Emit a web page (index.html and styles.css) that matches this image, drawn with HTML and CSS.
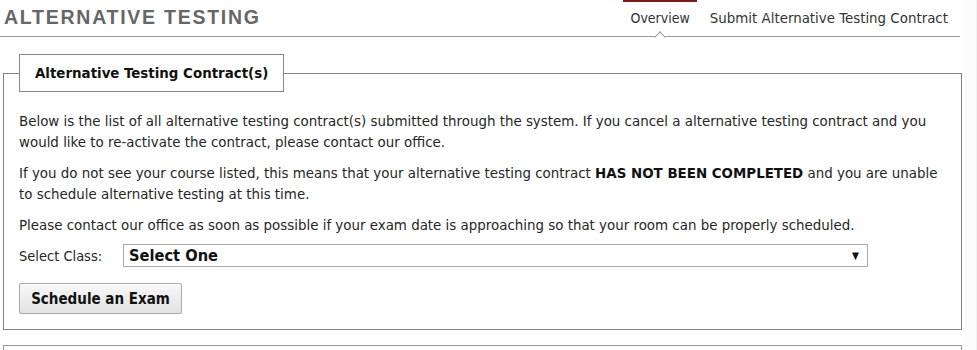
FILE: index.html
```html
<!DOCTYPE html>
<html>
<head>
<meta charset="utf-8">
<title>Alternative Testing</title>
<link rel="stylesheet" href="styles.css">
</head>
<body>
<div class="page">
  <div class="main">
    <header class="head">
      <h1 class="title">ALTERNATIVE TESTING</h1>
      <nav class="tabs">
        <a class="tab active">Overview<span class="notch"></span></a>
        <a class="tab">Submit Alternative Testing Contract</a>
      </nav>
    </header>

    <fieldset class="box">
      <legend class="box-legend">Alternative Testing Contract(s)</legend>
      <p class="para">Below is the list of all alternative testing contract(s) submitted through the system. If you cancel a alternative testing contract and you would like to re-activate the contract, please contact our office.</p>
      <p class="para">If you do not see your course listed, this means that your alternative testing contract <b class="strong">HAS NOT BEEN COMPLETED</b> and you are unable to schedule alternative testing at this time.</p>
      <p class="para">Please contact our office as soon as possible if your exam date is approaching so that your room can be properly scheduled.</p>
      <div class="field">
        <label class="field-label">Select Class:</label>
        <div class="select"><span class="select-text">Select One</span><span class="select-arrow">&#9660;</span></div>
      </div>
      <button class="btn">Schedule an Exam</button>
    </fieldset>

    <div class="box2"></div>
  </div>
  <div class="scroll"></div>
</div>
</body>
</html>
```

FILE: styles.css
```css
html, body {
  margin: 0;
  padding: 0;
  background: #fff;
}
body {
  font-family: "DejaVu Sans Condensed", "DejaVu Sans", sans-serif;
  font-size: 14.9px;
  color: #262626;
  overflow: hidden;
}
.page {
  display: flex;
  height: 350px;
}
.main {
  width: 962px;
  flex: none;
}
.scroll {
  flex: 1;
  margin-left: 2px;
  background: #fbfbfb;
  border-right: 1px solid #f0f0f0;
}
.head {
  display: flex;
  justify-content: space-between;
  align-items: flex-end;
  height: 36px;
  border-bottom: 1px solid #9a9a9a;
  margin-right: 2px;
}
.title {
  margin: 0 0 0 4px;
  align-self: center;
  padding-bottom: 1px;
  font-family: "Liberation Sans", Arial, sans-serif;
  font-weight: bold;
  font-size: 19.5px;
  letter-spacing: 1.75px;
  color: #666;
}
.tabs {
  display: flex;
  height: 36px;
  margin-right: 5px;
}
.tab {
  position: relative;
  display: flex;
  align-items: center;
  padding: 0 7px;
  color: #333;
  font-size: 14.9px;
  text-decoration: none;
  border-top: 2px solid transparent;
  box-sizing: border-box;
  height: 36px;
  padding-bottom: 2px;
}
.tab + .tab {
  margin-left: 6px;
}
.tab.active {
  border-top-color: #7b1c1c;
  font-size: 14px;
}
.notch {
  position: absolute;
  left: 50%;
  bottom: -5px;
  width: 7px;
  height: 7px;
  margin-left: -4px;
  background: #fff;
  border-left: 1px solid #9a9a9a;
  border-top: 1px solid #9a9a9a;
  transform: rotate(45deg);
}
.box {
  margin: 17px 0 0 3px;
  padding: 0 15px 15px 15px;
  border: 1px solid #828282;
  min-inline-size: 0;
}
.box-legend {
  padding: 10px 15px;
  margin-left: 0;
  border: 1px solid #888;
  font-weight: bold;
  font-size: 14.9px;
  color: #111;
  line-height: 16px;
}
.para {
  margin: 19px 0 0 0;
  line-height: 21px;
}
.para + .para {
  margin-top: 10px;
}
.strong {
  color: #111;
}
.field {
  display: flex;
  align-items: center;
  margin-top: 8px;
}
.field-label {
  width: 104px;
  font-size: 14.5px;
}
.select {
  display: flex;
  align-items: center;
  justify-content: space-between;
  width: 745px;
  height: 23px;
  box-sizing: border-box;
  border: 1px solid #aaa;
  padding: 0 8px 0 5px;
  background: #fff;
}
.select-text {
  font-weight: bold;
  font-size: 16.3px;
  color: #111;
}
.select-arrow {
  font-size: 10px;
  color: #111;
}
.btn {
  display: block;
  margin-top: 16px;
  width: 163px;
  height: 31px;
  border: 1px solid #aaa;
  border-radius: 2px;
  background: linear-gradient(#f8f8f8, #e2e2e2);
  font-family: "DejaVu Sans Condensed", "DejaVu Sans", sans-serif;
  font-weight: bold;
  font-size: 15px;
  color: #111;
}
.box2 {
  margin: 15px 0 0 3px;
  height: 4px;
  border: 1px solid #9a9a9a;
  border-bottom: none;
}
```
